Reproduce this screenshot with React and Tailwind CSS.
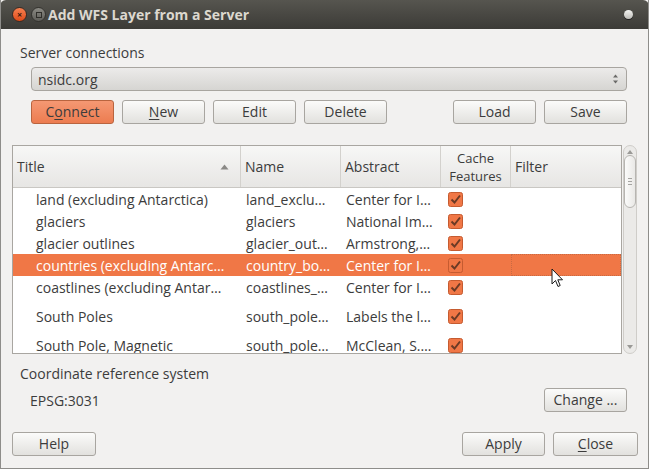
import React from 'react';

const font = { fontFamily: '"Open Sans", "DejaVu Sans", sans-serif' };

const Btn = ({ children, className = '', primary = false }) => (
  <button
    className={`h-[24px] rounded-[3px] border text-[14px] leading-none flex items-center justify-center ${
      primary
        ? 'border-[#b9643f] bg-gradient-to-b from-[#f59873] to-[#ec7c50] text-[#3c3c3c]'
        : 'border-[#a8a5a0] bg-gradient-to-b from-[#fbfbfa] to-[#e2e1de] text-[#3c3c3c]'
    } ${className}`}
  >
    {children}
  </button>
);

const Check = () => (
  <svg width="15" height="15" viewBox="0 0 15 15">
    <rect x="0.5" y="0.5" width="14" height="14" rx="2" fill="#f07746" stroke="#c55b30" />
    <path d="M3.5 7.5 L6.5 10.5 L12 3.5" fill="none" stroke="#6b3a25" strokeWidth="2" />
  </svg>
);

const rows = [
  { title: 'land (excluding Antarctica)', name: 'land_exclu…', abs: 'Center for I…', h: 'h-[22px]' },
  { title: 'glaciers', name: 'glaciers', abs: 'National Im…', h: 'h-[22px]' },
  { title: 'glacier outlines', name: 'glacier_out…', abs: 'Armstrong,…', h: 'h-[22px]' },
  { title: 'countries (excluding Antarc…', name: 'country_bo…', abs: 'Center for I…', h: 'h-[22px]', sel: true },
  { title: 'coastlines (excluding Antar…', name: 'coastlines_…', abs: 'Center for I…', h: 'h-[22px]' },
  { title: 'South Poles', name: 'south_pole…', abs: 'Labels the l…', h: 'h-[36px]' },
  { title: 'South Pole, Magnetic', name: 'south_pole…', abs: 'McClean, S.…', h: 'h-[22px]' },
];

export default function App() {
  return (
    <div style={font} className="w-[649px] h-[469px] bg-[#f2f1f0] text-[#3c3c3c] text-[14px] flex flex-col border-x border-b border-[#8e8d8a] relative overflow-hidden">
      {/* title bar */}
      <div className="h-[29px] shrink-0 rounded-t-[6px] bg-gradient-to-b from-[#56554f] to-[#3c3b37] flex items-center px-[12px] -mx-px">
        <div className="w-[15px] h-[15px] rounded-full bg-gradient-to-b from-[#f7804f] to-[#df4a16] border border-[#3a2a22] flex items-center justify-center text-[9px] leading-none text-[#3b1a0d] font-bold">×</div>
        <div className="ml-[4px] w-[15px] h-[15px] rounded-full bg-gradient-to-b from-[#8a8983] to-[#5f5e59] border border-[#33322e] flex items-center justify-center">
          <div className="w-[6px] h-[6px] border border-[#2f2e2a]"></div>
        </div>
        <div className="ml-[2px] text-[#dcd8cf] font-bold text-[14px]">Add WFS Layer from a Server</div>
        <div className="ml-auto mr-[4px] w-[9px] h-[9px] rounded-full bg-gradient-to-b from-[#f4f4f2] to-[#bdbcb8] shadow-[0_1px_0_#222]"></div>
      </div>

      <div className="pl-[19px] pr-[21px] pt-[15px] flex flex-col">
        <div className="leading-[18px]">Server connections</div>
        <div className="ml-[11px] mt-[5px] h-[24px] rounded-[4px] border border-[#a8a5a0] bg-gradient-to-b from-[#ecebea] to-[#d6d5d2] flex items-center pl-[6px] pr-[7px]">
          <span>nsidc.org</span>
          <svg className="ml-auto" width="7" height="12" viewBox="0 0 7 12">
            <path d="M1 4.5 L3.5 1.5 L6 4.5 Z" fill="#6a6a68" />
            <path d="M1 7.5 L3.5 10.5 L6 7.5 Z" fill="#6a6a68" />
          </svg>
        </div>
        <div className="ml-[11px] mt-[9px] flex">
          <Btn primary className="w-[83px]">
            <span>C<span className="underline underline-offset-2">o</span>nnect</span>
          </Btn>
          <Btn className="w-[83px] ml-[8px]">
            <span><span className="underline underline-offset-2">N</span>ew</span>
          </Btn>
          <Btn className="w-[83px] ml-[8px]">Edit</Btn>
          <Btn className="w-[83px] ml-[8px]">Delete</Btn>
          <Btn className="w-[83px] ml-auto">Load</Btn>
          <Btn className="w-[83px] ml-[8px]">Save</Btn>
        </div>
      </div>

      {/* table */}
      <div className="mt-[21px] ml-[11px] flex">
        <div className="w-[610px] h-[209px] border border-[#a9a6a1] bg-white overflow-hidden flex flex-col">
          <div className="h-[42px] shrink-0 flex bg-gradient-to-b from-[#f7f7f6] to-[#e7e6e4] border-b border-[#c9c7c3]">
            <div className="w-[228px] border-r border-[#d3d1cd] flex items-center pl-[4px] pr-[11px]">
              <span>Title</span>
              <svg className="ml-auto" width="9" height="6" viewBox="0 0 9 6"><path d="M0.5 5.5 L4.5 0.5 L8.5 5.5 Z" fill="#8a8986" /></svg>
            </div>
            <div className="w-[100px] border-r border-[#d3d1cd] flex items-center pl-[4px]">Name</div>
            <div className="w-[100px] border-r border-[#d3d1cd] flex items-center pl-[4px]">Abstract</div>
            <div className="w-[70px] border-r border-[#d3d1cd] flex flex-col items-center justify-center text-center text-[13px]">
              <div className="leading-[18px]">Cache</div>
              <div className="leading-[18px]">Features</div>
            </div>
            <div className="flex-1 flex items-center pl-[4px]">Filter</div>
          </div>
          {rows.map((r) => (
            <div key={r.title} className={`${r.h} shrink-0 flex items-center ${r.sel ? 'bg-[#f07746] text-white' : ''}`}>
              <div className="w-[228px] pl-[23px] whitespace-nowrap overflow-hidden">{r.title}</div>
              <div className="w-[100px] pl-[5px] whitespace-nowrap overflow-hidden">{r.name}</div>
              <div className="w-[100px] pl-[5px] whitespace-nowrap overflow-hidden">{r.abs}</div>
              <div className="w-[70px] pl-[7px] flex items-center"><Check /></div>
              <div className={`flex-1 self-stretch ${r.sel ? 'border border-dotted border-[#c96a43]' : ''}`}></div>
            </div>
          ))}
        </div>
        {/* scrollbar */}
        <div className="ml-[1px] w-[14px] h-[209px] rounded-[7px] border border-[#cfcdc9] bg-[#ebeae8] flex flex-col items-center">
          <svg className="mt-[4px]" width="6" height="4" viewBox="0 0 6 4"><path d="M0 4 L3 0 L6 4 Z" fill="#9a9996" /></svg>
          <div className="mt-[1px] w-[12px] h-[53px] rounded-[6px] border border-[#b7b5b1] bg-gradient-to-r from-[#fbfbfa] to-[#e9e8e6] flex flex-col items-center justify-center gap-[2px]">
            <div className="w-[4px] h-px bg-[#a5a4a1]"></div>
            <div className="w-[4px] h-px bg-[#a5a4a1]"></div>
            <div className="w-[4px] h-px bg-[#a5a4a1]"></div>
          </div>
          <svg className="mt-auto mb-[4px]" width="6" height="4" viewBox="0 0 6 4"><path d="M0 0 L3 4 L6 0 Z" fill="#9a9996" /></svg>
        </div>
      </div>

      <div className="pl-[19px] pr-[21px] pt-[11px] flex flex-col">
        <div className="leading-[18px]">Coordinate reference system</div>
        <div className="mt-[5px] flex items-center">
          <span className="ml-[10px]">EPSG:3031</span>
          <Btn className="ml-auto w-[83px]">Change ...</Btn>
        </div>
      </div>
      <div className="mt-[20px] pl-[11px] pr-[10px] flex">
        <Btn className="w-[84px]">Help</Btn>
        <Btn className="ml-auto w-[83px]">Apply</Btn>
        <Btn className="ml-[8px] w-[85px]">
          <span><span className="underline underline-offset-2">C</span>lose</span>
        </Btn>
      </div>

      {/* mouse pointer */}
      <svg className="absolute left-[550px] top-[268px]" width="13" height="20" viewBox="0 0 13 20">
        <path d="M1 1 L1 16 L4.5 12.5 L7 18.5 L9.2 17.5 L6.8 11.8 L11.5 11.8 Z" fill="#ffffff" stroke="#1a1a1a" strokeWidth="1" strokeLinejoin="round" />
      </svg>
    </div>
  );
}
